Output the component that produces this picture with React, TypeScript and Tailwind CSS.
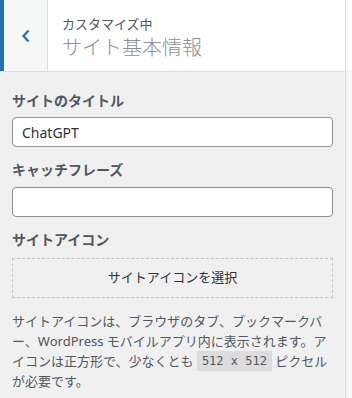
export default function App() {
  return (
    <div
      className="flex h-[398px] w-[352px] overflow-hidden bg-[#f6f7f7] text-[#2c3338]"
      style={{ fontFamily: '"Noto Sans", "Noto Sans CJK JP", sans-serif' }}
    >
      <div className="flex w-[346px] shrink-0 flex-col border-r border-[#dcdcde] bg-[#f0f0f1]">
        <div className="flex h-[72px] shrink-0 border-b border-[#dcdcde] bg-white">
          <div className="w-1 bg-[#2271b1]" />
          <button className="flex w-11 items-center justify-center border-r border-[#dcdcde] bg-[#f6f7f7] text-[#2271b1]">
            <svg width="10" height="14" viewBox="0 0 10 14" fill="none">
              <path d="M7.5 1.5 2.5 7l5 5.5" stroke="currentColor" strokeWidth="2.2" />
            </svg>
          </button>
          <div className="flex flex-col justify-center pl-[14px] pt-1">
            <span className="text-[13px] leading-5 text-[#50575e]">カスタマイズ中</span>
            <span className="text-[20px] font-light leading-7 text-[#8c8f94]">サイト基本情報</span>
          </div>
        </div>
        <div className="flex flex-col px-3 pt-[19px]">
          <label className="text-[14px] font-bold leading-5 text-[#50575e]">サイトのタイトル</label>
          <input
            className="mt-[6px] h-[30px] w-[321px] rounded border border-[#8c8f94] bg-white px-[9px] text-[14px] text-[#2c3338] outline-none"
            defaultValue="ChatGPT"
          />
          <label className="mt-[13px] text-[14px] font-bold leading-5 text-[#50575e]">キャッチフレーズ</label>
          <input className="mt-[7px] h-[30px] w-[321px] rounded border border-[#8c8f94] bg-white px-[9px] text-[14px] outline-none" />
          <label className="mt-[13px] text-[14px] font-bold leading-5 text-[#50575e]">サイトアイコン</label>
          <div className="mt-[8px] flex h-[40px] w-[321px] items-center justify-center border border-dashed border-[#c3c4c7] text-[13px] text-[#2c3338]">
            サイトアイコンを選択
          </div>
          <p className="mt-[13px] w-[322px] text-[13px] leading-[20px] text-[#50575e]">
            サイトアイコンは、ブラウザのタブ、ブックマークバー、WordPress モバイルアプリ内に表示されます。アイコンは正方形で、少なくとも{" "}
            <code
              className="inline-block h-[20px] bg-[#dcdcde] px-[5px] align-top text-[12px] leading-[20px]"
              style={{ fontFamily: '"DejaVu Sans Mono", monospace' }}
            >
              512 x 512
            </code>{" "}
            ピクセルが必要です。
          </p>
        </div>
      </div>
      <div className="flex flex-1 flex-col">
        <div className="h-[70px] bg-white" />
        <div className="flex-1 border-l-2 border-[#f0f0f1] bg-[#f6f7f7]" />
      </div>
    </div>
  );
}
